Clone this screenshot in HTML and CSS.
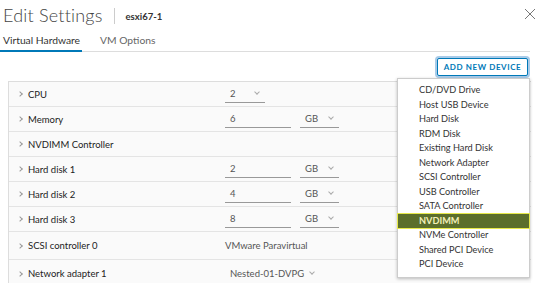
FILE: index.html
```html
<!DOCTYPE html>
<html lang="en">
<head>
    <meta charset="UTF-8">
    <meta name="viewport" content="width=device-width, initial-scale=1.0">
    <title>Edit Settings</title>
    <link rel="stylesheet" href="styles.css">
</head>
<body>
    <div class="dialog">
        <div class="header">
            <h1>Edit Settings</h1>
            <span class="divider"></span>
            <span class="vm-name">esxi67-1</span>
            <svg class="close" width="12" height="12" viewBox="0 0 12 12">
                <path d="M1 1 L11 11 M11 1 L1 11" stroke="#777" stroke-width="1" fill="none"/>
            </svg>
        </div>

        <div class="tabs">
            <div class="tab active">Virtual Hardware</div>
            <div class="tab">VM Options</div>
        </div>

        <div class="toolbar">
            <button class="add-btn">ADD NEW DEVICE</button>
            <ul class="menu">
                <li>CD/DVD Drive</li>
                <li>Host USB Device</li>
                <li>Hard Disk</li>
                <li>RDM Disk</li>
                <li>Existing Hard Disk</li>
                <li>Network Adapter</li>
                <li>SCSI Controller</li>
                <li>USB Controller</li>
                <li>SATA Controller</li>
                <li class="selected">NVDIMM</li>
                <li>NVMe Controller</li>
                <li>Shared PCI Device</li>
                <li>PCI Device</li>
            </ul>
        </div>

        <div class="hardware">
            <div class="row">
                <span class="label"><i class="chev"></i>CPU</span>
                <div class="values">
                    <span class="select cpu">2<i class="caret"></i></span>
                </div>
            </div>
            <div class="row">
                <span class="label"><i class="chev"></i>Memory</span>
                <div class="values">
                    <span class="input">6</span>
                    <span class="select unit">GB<i class="caret"></i></span>
                </div>
            </div>
            <div class="row">
                <span class="label"><i class="chev"></i>NVDIMM Controller</span>
                <div class="values"></div>
            </div>
            <div class="row">
                <span class="label"><i class="chev"></i>Hard disk 1</span>
                <div class="values">
                    <span class="input">2</span>
                    <span class="select unit">GB<i class="caret"></i></span>
                </div>
            </div>
            <div class="row">
                <span class="label"><i class="chev"></i>Hard disk 2</span>
                <div class="values">
                    <span class="input">4</span>
                    <span class="select unit">GB<i class="caret"></i></span>
                </div>
            </div>
            <div class="row">
                <span class="label"><i class="chev"></i>Hard disk 3</span>
                <div class="values">
                    <span class="input">8</span>
                    <span class="select unit">GB<i class="caret"></i></span>
                </div>
            </div>
            <div class="row tall">
                <span class="label"><i class="chev"></i>SCSI controller 0</span>
                <div class="values">
                    <span class="plain">VMware Paravirtual</span>
                </div>
            </div>
            <div class="row tall">
                <span class="label"><i class="chev"></i>Network adapter 1</span>
                <div class="values">
                    <span class="select net">Nested-01-DVPG<i class="caret"></i></span>
                </div>
            </div>
        </div>
    </div>
</body>
</html>
```

FILE: styles.css
```css
body{
    margin: 0;
    background: #fff;
    font-family: Lato, "Open Sans", sans-serif;
    color: #333;
    overflow: hidden;
}
.dialog{
    width: 540px;
    height: 283px;
    overflow: hidden;
}
.header{
    display: flex;
    align-items: center;
    height: 30px;
    padding: 0 4px 0 3px;
}
h1{
    margin: 0;
    font-size: 18px;
    font-weight: 300;
    color: #444;
    letter-spacing: 0.2px;
}
.divider{
    width: 1px;
    height: 16px;
    background: #ccc;
    margin: 2px 11px 0 11px;
}
.vm-name{
    font-size: 9.5px;
    font-weight: 700;
    color: #333;
    margin-top: 2px;
}
.close{
    margin-left: auto;
    margin-top: -2px;
}
.tabs{
    display: flex;
    gap: 15px;
    width: 530px;
    border-bottom: 1px solid #ddd;
}
.tab{
    font-size: 10.3px;
    line-height: 13px;
    color: #666;
    padding: 4px 2px 3px 3px;
}
.tab.active{
    color: #333;
    border-bottom: 2px solid #0079b8;
    margin-bottom: -1px;
}
.toolbar{
    position: relative;
    display: flex;
    justify-content: flex-end;
    padding: 6px 12px 0 0;
    height: 29px;
    box-sizing: border-box;
}
.add-btn{
    height: 18px;
    width: 91px;
    padding: 0;
    background: #fff;
    border: 1px solid #0079b8;
    border-radius: 2px;
    box-shadow: 0 0 0 2px #a9cbe8;
    color: #0079b8;
    font-family: Lato, sans-serif;
    font-size: 8px;
    font-weight: 700;
    letter-spacing: 0.6px;
}
.menu{
    position: absolute;
    top: 26px;
    left: 397px;
    width: 131px;
    margin: 0;
    padding: 4px 0 5px;
    list-style: none;
    background: #fff;
    border: 1px solid #ccc;
    box-shadow: 0 1px 3px rgba(0,0,0,0.25);
    z-index: 2;
}
.menu li{
    height: 14.5px;
    line-height: 14.5px;
    padding-left: 21px;
    font-size: 9.2px;
    color: #333;
}
.menu li.selected{
    background: #5b6e2c;
    outline: 1px solid #e6e84a;
    color: #f2f0b8;
    font-weight: 700;
}
.hardware{
    margin-left: 8px;
    width: 522px;
    border: 1px solid #ddd;
    border-right: none;
    background: #fafafa;
}
.row{
    display: flex;
    align-items: center;
    height: 24px;
    border-bottom: 1px solid #e4e4e4;
}
.row.tall{
    height: 27px;
}
.label{
    width: 216px;
    display: flex;
    align-items: center;
    font-size: 9.5px;
    color: #222;
}
.chev{
    width: 3px;
    height: 3px;
    border-right: 1px solid #999;
    border-top: 1px solid #999;
    transform: rotate(45deg);
    margin: 0 6px 0 9px;
}
.values{
    display: flex;
    align-items: center;
    gap: 9px;
    font-size: 9.5px;
    color: #555;
    white-space: nowrap;
}
.input, .select{
    display: flex;
    align-items: center;
    justify-content: space-between;
    box-sizing: border-box;
    height: 17px;
    padding: 0 4px 0 5px;
    border-bottom: 1px solid #999;
}
.input{
    width: 66px;
}
.select.cpu{
    width: 40px;
}
.select.unit{
    width: 39px;
}
.select.net{
    width: 89px;
    height: 21px;
}
.caret{
    flex-shrink: 0;
    width: 3px;
    height: 3px;
    border-right: 1px solid #aaa;
    border-bottom: 1px solid #aaa;
    transform: rotate(45deg);
    margin: -3px 2px 0 6px;
}
.plain{
    padding-left: 0;
}
```
